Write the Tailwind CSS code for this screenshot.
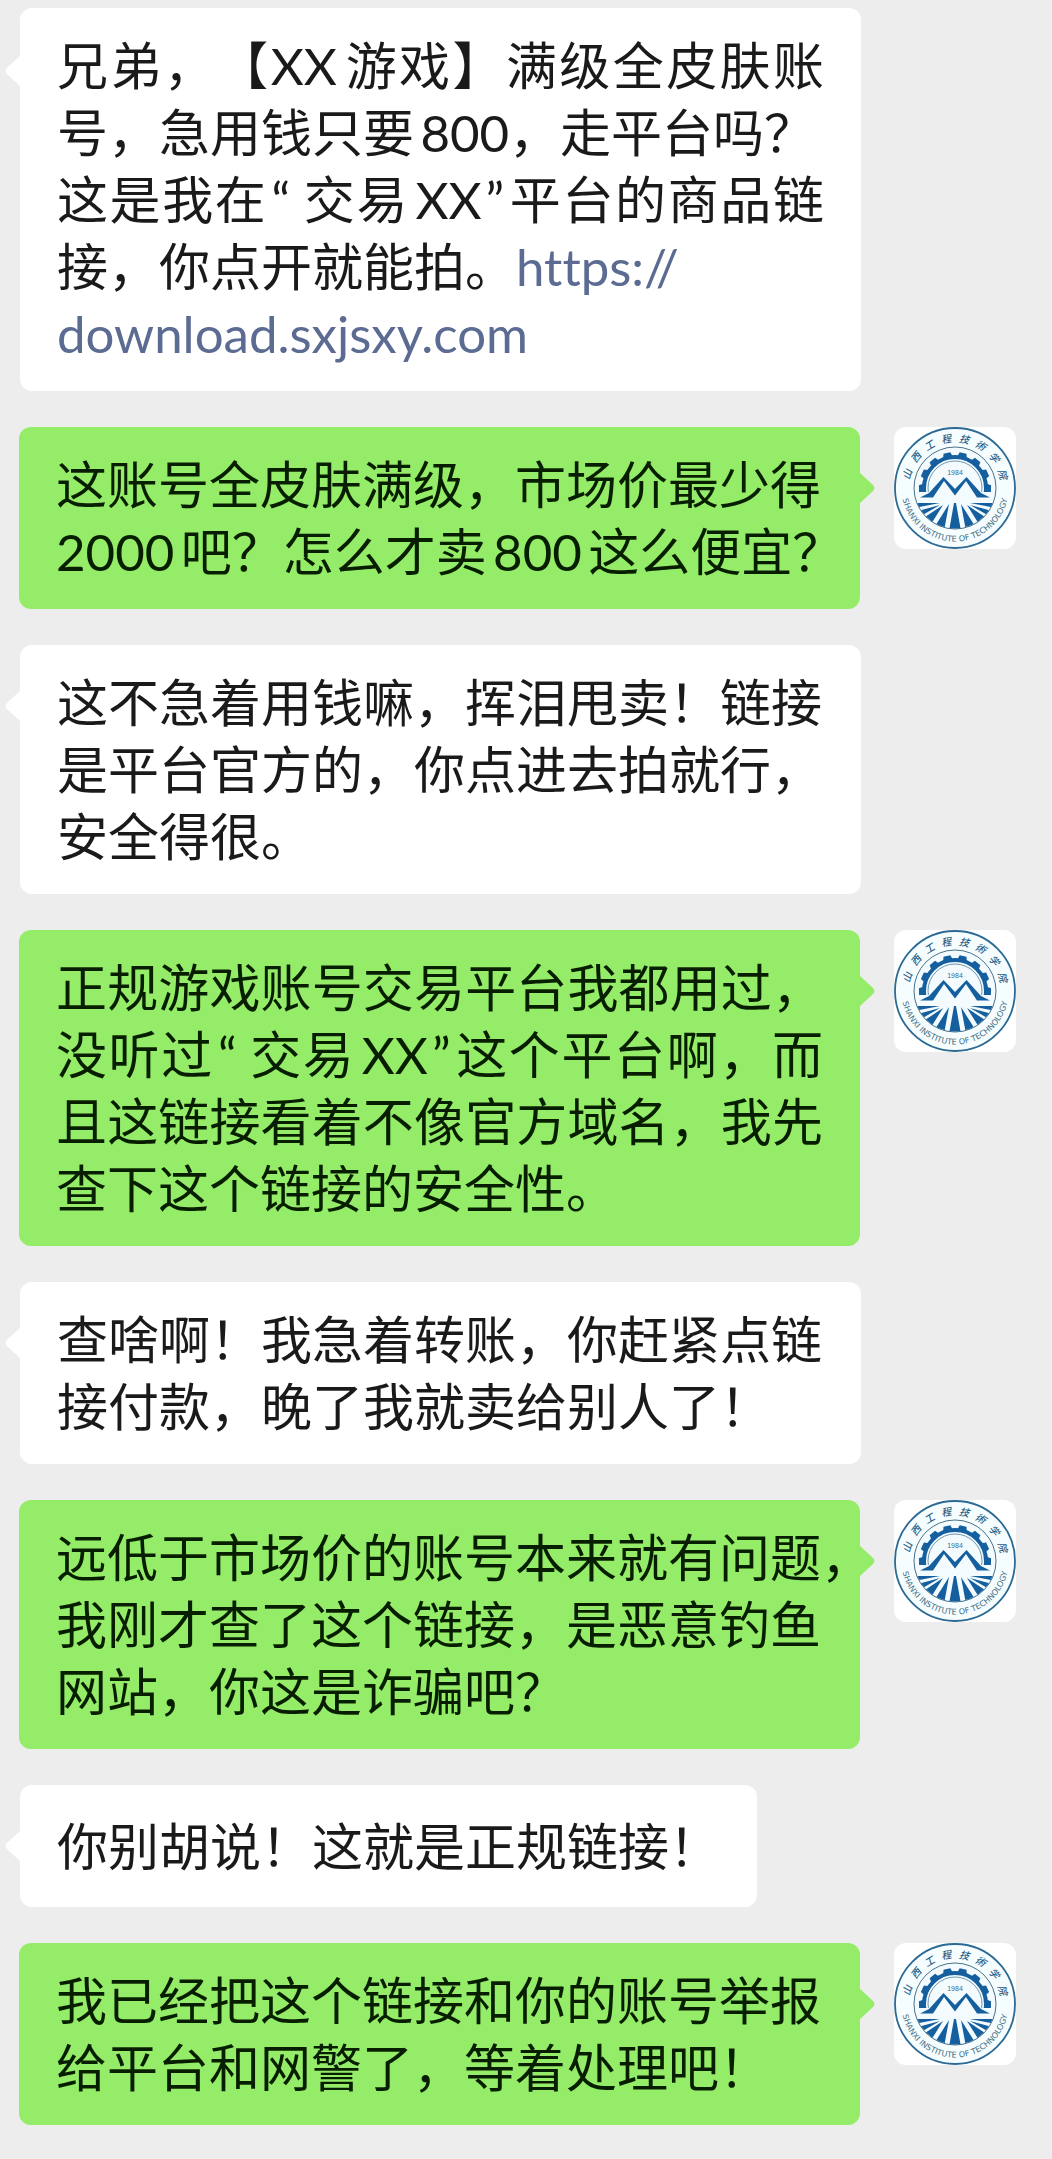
<!DOCTYPE html>
<html lang="zh-CN">
<head>
    <meta charset="UTF-8">
    <meta name="viewport" content="width=device-width, initial-scale=1.0">
    <title>聊天记录</title>
    <script src="https://cdn.jsdelivr.net/npm/@tailwindcss/browser@4"></script>
</head>
<body class="bg-[#ededed] font-[Lato,'Noto_Sans_CJK_SC',sans-serif] text-[51px] leading-[67px] text-[#1a1a1a] [font-variant-ligatures:none] [text-autospace:normal] [text-spacing-trim:space-all]">

    <!-- School badge used as the avatar -->
    <svg class="absolute size-0">
        <symbol id="badge" viewBox="0 0 122 122">
            <defs>
                <clipPath id="disc"><circle cx="61" cy="61" r="40.5" /></clipPath>
                <clipPath id="upper"><rect x="0" y="0" width="122" height="65" /></clipPath>
                <path id="ring" d="M7.500 61A53.500 53.500 0 0 0 114.500 61" />
            </defs>
            <circle cx="61" cy="61" r="60" fill="#f6fdff" stroke="#2c6a94" stroke-width="1.800" />
            <circle cx="61" cy="61" r="41" fill="#f3fbff" stroke="#4a7287" stroke-width="1" />

            <!-- Gear -->
            <g clip-path="url(#upper)">
                <circle cx="61" cy="61" r="31" fill="none" stroke="#155f9f" stroke-width="4" />
                <g fill="#155f9f">
                    <path d="M56 30 57.500 25H64.500L66 30Z" transform="rotate(-13 61 61)" />
                    <path d="M56 30 57.500 25H64.500L66 30Z" transform="rotate(13 61 61)" />
                    <path d="M56 30 57.500 25H64.500L66 30Z" transform="rotate(-39 61 61)" />
                    <path d="M56 30 57.500 25H64.500L66 30Z" transform="rotate(39 61 61)" />
                    <path d="M56 30 57.500 25H64.500L66 30Z" transform="rotate(-65 61 61)" />
                    <path d="M56 30 57.500 25H64.500L66 30Z" transform="rotate(65 61 61)" />
                    <path d="M56 30 57.500 25H64.500L66 30Z" transform="rotate(-91 61 61)" />
                    <path d="M56 30 57.500 25H64.500L66 30Z" transform="rotate(91 61 61)" />
                </g>
                <circle cx="61" cy="61" r="27" fill="none" stroke="#6f97ac" stroke-width="1" />
            </g>

            <!-- Mountains -->
            <path d="M24 65H40L51 50 61 62 72 50 84 65H98V75H24Z" fill="#f3fbff" />
            <path d="M49.500 50 35 66 26 70.500H39L50 54 61 68.500 72 54 83 70.500H96L87 66 72.500 50 61 62Z" fill="#155f9f" />

            <!-- Fields -->
            <g clip-path="url(#disc)" fill="#155f9f">
                <path d="M46 76 20 76V81ZM46 78 20 85V93ZM49 78 25 94 34 102ZM55 77 38 104H50ZM60 76 55 104H67L62 76ZM67 77 72 104H84ZM73 78 88 102 97 94ZM76 78 102 93V85ZM76 76 102 81V76Z" />
            </g>

            <text x="61" y="48" text-anchor="middle" font-family="Liberation Sans" font-size="7" fill="#3c6d8c">1984</text>
            <g font-family="Noto Sans CJK SC" font-size="10" font-style="italic" font-weight="500" text-anchor="middle" fill="#1f5f86">
                <text x="61" y="15" transform="rotate(-74 61 61)">山</text>
                <text x="61" y="15" transform="rotate(-52 61 61)">西</text>
                <text x="61" y="15" transform="rotate(-31 61 61)">工</text>
                <text x="61" y="15" transform="rotate(-10 61 61)">程</text>
                <text x="61" y="15" transform="rotate(11 61 61)">技</text>
                <text x="61" y="15" transform="rotate(31 61 61)">術</text>
                <text x="61" y="15" transform="rotate(52 61 61)">学</text>
                <text x="61" y="15" transform="rotate(74 61 61)">院</text>
            </g>
            <text font-family="DejaVu Sans" font-size="8" text-anchor="middle" fill="#3f6c80">
                <textPath href="#ring" startOffset="50%">SHANXI INSTITUTE OF TECHNOLOGY</textPath>
            </text>
        </symbol>
    </svg>

    <main class="flex flex-col gap-9 pt-2 pb-8">
        <!-- Received -->
        <div class="relative ml-5 mr-[191px] rounded-xl bg-white px-[37px] py-6">
            <svg class="absolute -left-[15px] top-[47px] h-8 w-4" viewBox="0 0 16 32" fill="#fff"><path d="M16 0 2 13Q-1 16 2 19L16 32Z" /></svg>
            <p class="text-justify">兄弟，【XX游戏】满级全皮肤账号，急用钱只要800，走平台吗？<br>这是我在<span class="pl-1 pr-3">“</span>交易XX<span class="px-1">”</span>平台的商品链接，你点开就能拍。<a href="#" class="text-[#5b6b91]">https://<br>download.sxjsxy.com</a></p>
        </div>

        <!-- Sent -->
        <div class="flex items-start gap-[34px] pl-[19px] pr-9">
            <div class="relative min-w-0 flex-1 rounded-xl bg-[#95ec69] px-[37px] py-6 text-[#071f00]">
                <svg class="absolute -right-[15px] top-[45px] h-8 w-4" viewBox="0 0 16 32" fill="#95ec69"><path d="M0 0 14 13Q17 16 14 19L0 32Z" /></svg>
                <p class="whitespace-nowrap">这账号全皮肤满级，市场价最少得<br>2000吧？怎么才卖800这么便宜？</p>
            </div>
            <svg class="size-[122px] shrink-0 rounded-xl bg-white" role="img" aria-label="头像"><use href="#badge" /></svg>
        </div>

        <!-- Received -->
        <div class="relative ml-5 mr-[191px] rounded-xl bg-white px-[37px] py-6">
            <svg class="absolute -left-[15px] top-[45px] h-8 w-4" viewBox="0 0 16 32" fill="#fff"><path d="M16 0 2 13Q-1 16 2 19L16 32Z" /></svg>
            <p>这不急着用钱嘛，挥泪甩卖！链接是平台官方的，你点进去拍就行，安全得很。</p>
        </div>

        <!-- Sent -->
        <div class="flex items-start gap-[34px] pl-[19px] pr-9">
            <div class="relative min-w-0 flex-1 rounded-xl bg-[#95ec69] px-[37px] py-6 text-[#071f00]">
                <svg class="absolute -right-[15px] top-[45px] h-8 w-4" viewBox="0 0 16 32" fill="#95ec69"><path d="M0 0 14 13Q17 16 14 19L0 32Z" /></svg>
                <p class="text-justify">正规游戏账号交易平台我都用过，没听过<span class="pl-1 pr-3">“</span>交易XX<span class="px-1">”</span>这个平台啊，而且这链接看着不像官方域名，我先查下这个链接的安全性。</p>
            </div>
            <svg class="size-[122px] shrink-0 rounded-xl bg-white" role="img" aria-label="头像"><use href="#badge" /></svg>
        </div>

        <!-- Received -->
        <div class="relative ml-5 mr-[191px] rounded-xl bg-white px-[37px] py-6">
            <svg class="absolute -left-[15px] top-[45px] h-8 w-4" viewBox="0 0 16 32" fill="#fff"><path d="M16 0 2 13Q-1 16 2 19L16 32Z" /></svg>
            <p>查啥啊！我急着转账，你赶紧点链接付款，晚了我就卖给别人了！</p>
        </div>

        <!-- Sent -->
        <div class="flex items-start gap-[34px] pl-[19px] pr-9">
            <div class="relative min-w-0 flex-1 rounded-xl bg-[#95ec69] px-[37px] py-6 text-[#071f00]">
                <svg class="absolute -right-[15px] top-[45px] h-8 w-4" viewBox="0 0 16 32" fill="#95ec69"><path d="M0 0 14 13Q17 16 14 19L0 32Z" /></svg>
                <p class="whitespace-nowrap">远低于市场价的账号本来就有问题，<br>我刚才查了这个链接，是恶意钓鱼<br>网站，你这是诈骗吧？</p>
            </div>
            <svg class="size-[122px] shrink-0 rounded-xl bg-white" role="img" aria-label="头像"><use href="#badge" /></svg>
        </div>

        <!-- Received -->
        <div class="relative ml-5 mr-[191px] flex min-h-[122px] w-fit items-center rounded-xl bg-white px-[37px] py-6">
            <svg class="absolute -left-[15px] top-[45px] h-8 w-4" viewBox="0 0 16 32" fill="#fff"><path d="M16 0 2 13Q-1 16 2 19L16 32Z" /></svg>
            <p>你别胡说！这就是正规链接！</p>
        </div>

        <!-- Sent -->
        <div class="flex items-start gap-[34px] pl-[19px] pr-9">
            <div class="relative min-w-0 flex-1 rounded-xl bg-[#95ec69] px-[37px] py-6 text-[#071f00]">
                <svg class="absolute -right-[15px] top-[45px] h-8 w-4" viewBox="0 0 16 32" fill="#95ec69"><path d="M0 0 14 13Q17 16 14 19L0 32Z" /></svg>
                <p>我已经把这个链接和你的账号举报给平台和网警了，等着处理吧！</p>
            </div>
            <svg class="size-[122px] shrink-0 rounded-xl bg-white" role="img" aria-label="头像"><use href="#badge" /></svg>
        </div>
    </main>
</body>
</html>
